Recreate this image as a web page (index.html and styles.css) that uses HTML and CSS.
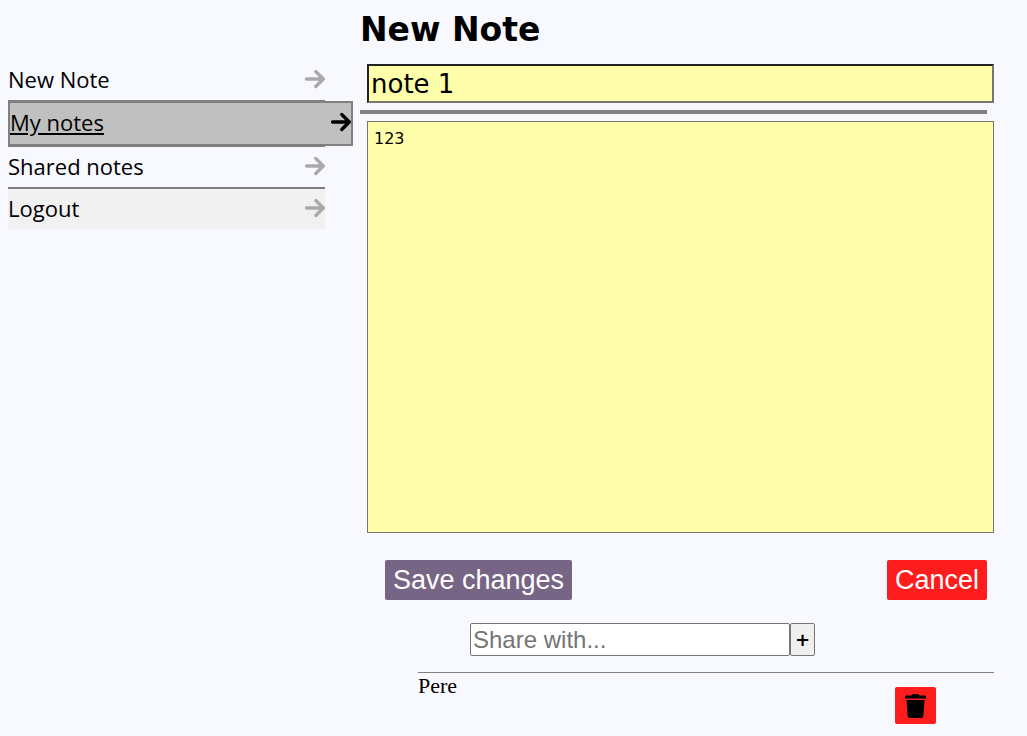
FILE: index.html
```html
<!DOCTYPE html>
<html lang="en">
<head>
<meta charset="utf-8">
<title>New Note</title>
<link rel="stylesheet" href="styles.css">
</head>
<body>
<svg class="sprite" aria-hidden="true">
  <symbol id="arrow" viewBox="0 0 20 20">
    <path d="M1.5 10H17.5M10.8 2.5L18.3 10L10.8 17.5" fill="none" stroke="currentColor" stroke-width="3.3" stroke-linecap="round" stroke-linejoin="round"/>
  </symbol>
</svg>
<div class="layout">
  <nav>
    <ul class="menu">
      <li><a href="#new">New Note <svg class="arrow" aria-hidden="true"><use href="#arrow"/></svg></a></li>
      <li class="active"><a href="#mine"><span>My notes</span> <svg class="arrow" aria-hidden="true"><use href="#arrow"/></svg></a></li>
      <li><a href="#shared">Shared notes <svg class="arrow" aria-hidden="true"><use href="#arrow"/></svg></a></li>
      <li class="logout"><a href="#logout">Logout <svg class="arrow" aria-hidden="true"><use href="#arrow"/></svg></a></li>
    </ul>
  </nav>
  <main>
    <h1>New Note</h1>
    <form class="note">
      <input class="title" type="text" value="note 1" aria-label="Title">
      <hr>
      <textarea class="text" aria-label="Text">123</textarea>
      <div class="actions">
        <button class="button save" type="button">Save changes</button>
        <button class="button cancel" type="button">Cancel</button>
      </div>
    </form>
    <form class="share">
      <input class="user" type="text" placeholder="Share with..." aria-label="Share with">
      <button class="add" type="button" aria-label="Add">+</button>
    </form>
    <ul class="people">
      <li>
        <span>Pere</span>
        <button class="delete" type="button" aria-label="Remove Pere">
          <svg viewBox="0 0 21 24" aria-hidden="true"><path d="M1 1.5H6.5L7.2.4Q7.5 0 8 0H13Q13.5 0 13.8.4L14.5 1.5H20Q21 1.5 21 2.3V4.5H0V2.3Q0 1.5 1 1.5ZM1.5 6H19.5L18.4 22Q18.2 24 16.3 24H4.7Q2.8 24 2.6 22Z"/></svg>
        </button>
      </li>
    </ul>
  </main>
</div>
</body>
</html>
```
FILE: styles.css
```css
* {
  box-sizing: border-box;
}

body {
  margin: 0;
  background: ghostwhite;
  color: #000;
  font-family: "Liberation Serif", "Times New Roman", serif;
}

.sprite {
  display: none;
}

.layout {
  display: grid;
  grid-template-columns: minmax(0, 1fr) minmax(0, 2fr);
  column-gap: 35px;
  padding: 0 33px 12px 8px;
}

.menu,
.people {
  list-style: none;
  margin: 0;
  padding: 0;
}

.menu {
  padding-top: 60px;
  font: 22px/36px "Open Sans", "Noto Sans", sans-serif;
}

.menu li {
  border-bottom: 2px solid gray;
}

.menu .logout {
  border-bottom: 0;
  background: #f1f1f1;
}

.menu a {
  display: flex;
  align-items: center;
  justify-content: space-between;
  height: 40px;
  padding-bottom: 3px;
  color: #000;
  text-decoration: none;
}

.arrow {
  width: 20px;
  height: 20px;
  color: darkgray;
}

.menu .active a {
  height: 45px;
  margin: -1px -28px -1px 0;
  border: 2px solid gray;
  background: silver;
}

.active span {
  text-decoration: underline;
}

.active .arrow {
  color: #000;
}

h1 {
  margin: 0;
  padding: 10px 0 14px;
  font: bold 33px/40px "DejaVu Sans", Verdana, sans-serif;
}

.title,
.text {
  display: block;
  width: calc(100% - 7px);
  margin: 0 0 0 7px;
  border-radius: 0;
  background: #ffffab;
  color: #000;
  font-family: "DejaVu Sans", Verdana, sans-serif;
}

.title {
  height: 39px;
  padding: 1px 2px;
  border: 2px inset #767676;
  font-size: 26px;
}

hr {
  height: 4px;
  margin: 7px 7px 7px 0;
  border: 0;
  background: gray;
}

.text {
  height: 412px;
  padding: 6px;
  border: 1px solid #767676;
  resize: none;
  font-size: 16px;
  line-height: 22px;
}

.actions {
  display: flex;
  justify-content: space-between;
  margin: 27px 7px 23px 25px;
}

.button,
.delete {
  border: 0;
  border-radius: 2px;
  background: #ff1c1c;
}

.button {
  height: 40px;
  padding: 0 8px;
  color: #fff;
  font: 27px "Liberation Sans", Arial, sans-serif;
}

.button.save {
  background: #776585;
}

.share {
  display: flex;
  margin: 0 0 16px 110px;
}

.user {
  width: 320px;
  height: 33px;
  padding: 1px 2px;
  border: 1px solid #767676;
  border-radius: 2px;
  background: #fff;
  font: 24px "Liberation Sans", Arial, sans-serif;
}

.user::placeholder {
  color: #757575;
}

.add {
  width: 25px;
  padding: 0;
  border: 1px solid #767676;
  border-radius: 2px;
  background: #efefef;
  color: #000;
  font: bold 18px "DejaVu Sans", Verdana, sans-serif;
}

.people {
  padding-left: 58px;
  font-size: 22px;
  line-height: 26px;
}

.people li {
  display: flex;
  justify-content: space-between;
  align-items: flex-start;
  padding-right: 58px;
  border-top: 1px solid gray;
}

.delete {
  display: grid;
  place-items: center;
  width: 41px;
  height: 37px;
  margin-top: 14px;
  padding: 0;
}

.delete svg {
  width: 21px;
  height: 24px;
}
```
